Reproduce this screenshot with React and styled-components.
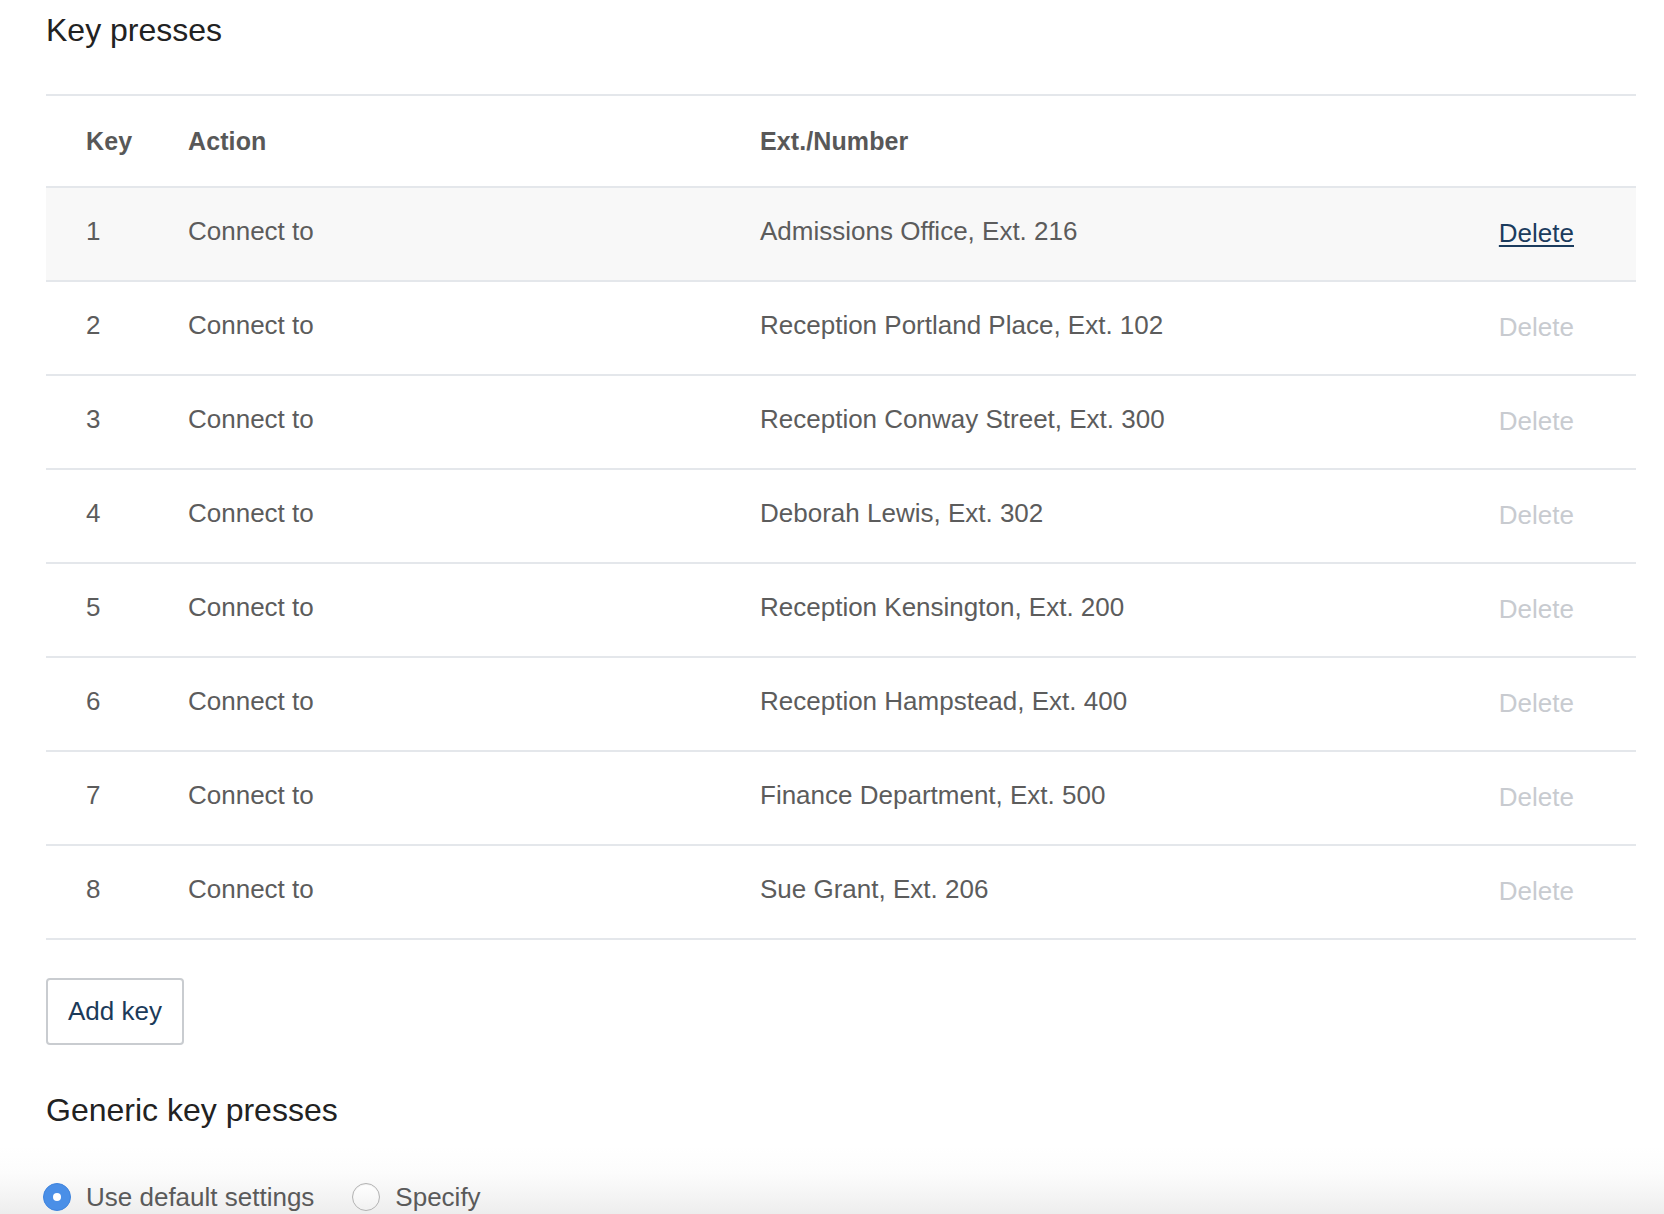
import React from "react";
import styled, { createGlobalStyle } from "styled-components";

const GlobalStyle = createGlobalStyle`
  html, body { margin: 0; padding: 0; background: #ffffff; }
  body { font-family: "Liberation Sans", Arial, Helvetica, sans-serif; }
  * { box-sizing: border-box; }
`;

const Page = styled.div`
  padding: 0 28px 0 46px;
  display: flex;
  flex-direction: column;
  align-items: stretch;
`;

const Heading = styled.h2`
  margin: ${(p) => p.$top}px 0 0 0;
  font-size: 32px;
  line-height: 38px;
  font-weight: 400;
  color: #222222;
`;

const Table = styled.div`
  margin-top: 45px;
  border-top: 2px solid #e4e7eb;
  display: flex;
  flex-direction: column;
`;

const Row = styled.div`
  display: grid;
  grid-template-columns: 102px 572px 1fr auto;
  align-items: center;
  padding: 0 62px 0 40px;
  height: ${(p) => (p.$header ? 92 : 94)}px;
  border-bottom: 2px solid #e4e7eb;
  background: ${(p) => (p.$active ? "#f8f8f8" : "#ffffff")};
`;

const HeadCell = styled.div`
  font-size: 25px;
  font-weight: 700;
  color: #585858;
  letter-spacing: 0.1px;
`;

const Cell = styled.div`
  font-size: 26px;
  color: #5c5c5c;
  padding-bottom: 6px;
  white-space: nowrap;
`;

const DeleteLink = styled.a`
  font-size: 26px;
  padding-bottom: 2px;
  cursor: pointer;
  color: ${(p) => (p.$active ? "#1b3c5e" : "#c8cbd0")};
  text-decoration: ${(p) => (p.$active ? "underline" : "none")};
  text-decoration-thickness: 2px;
  text-underline-offset: 3px;
`;

const AddButton = styled.button`
  align-self: flex-start;
  margin-top: 38px;
  height: 67px;
  padding: 0 20px;
  background: #ffffff;
  border: 2px solid #c9ccd0;
  border-radius: 4px;
  font-family: "Liberation Sans", Arial, Helvetica, sans-serif;
  font-size: 26px;
  color: #1b3a5a;
  cursor: pointer;
`;

const RadioBar = styled.div`
  margin: 17px -28px 0 -46px;
  padding: 37px 0 3px 43px;
  height: 68px;
  display: flex;
  align-items: center;
  gap: 38px;
  background: linear-gradient(to bottom, #ffffff 0%, #fcfcfc 40%, #f4f4f4 75%, #ededed 100%);
`;

const RadioLabel = styled.label`
  display: flex;
  align-items: center;
  gap: 15px;
  font-size: 26px;
  color: #5a5a5a;
  cursor: pointer;
`;

const RadioCircle = styled.span`
  width: 28px;
  height: 28px;
  border-radius: 50%;
  flex: none;
  display: flex;
  align-items: center;
  justify-content: center;
  background: ${(p) =>
    p.$checked ? "#4a8fe7" : "linear-gradient(to bottom, #ffffff, #f1f1f1)"};
  border: 1px solid ${(p) => (p.$checked ? "#3f84de" : "#b3b3b3")};
  box-shadow: ${(p) => (p.$checked ? "none" : "inset 0 1px 1px rgba(0,0,0,0.06)")};
  &::after {
    content: "";
    display: ${(p) => (p.$checked ? "block" : "none")};
    width: 8px;
    height: 8px;
    border-radius: 50%;
    background: #ffffff;
  }
`;

const rows = [
  "Admissions Office, Ext. 216",
  "Reception Portland Place, Ext. 102",
  "Reception Conway Street, Ext. 300",
  "Deborah Lewis, Ext. 302",
  "Reception Kensington, Ext. 200",
  "Reception Hampstead, Ext. 400",
  "Finance Department, Ext. 500",
  "Sue Grant, Ext. 206",
];

export default function App() {
  return (
    <>
      <GlobalStyle />
      <Page>
        <Heading $top={11}>Key presses</Heading>
        <Table>
          <Row $header>
            <HeadCell>Key</HeadCell>
            <HeadCell>Action</HeadCell>
            <HeadCell>Ext./Number</HeadCell>
            <span />
          </Row>
          {rows.map((dest, i) => (
            <Row key={i} $active={i === 0}>
              <Cell>{i + 1}</Cell>
              <Cell>Connect to</Cell>
              <Cell>{dest}</Cell>
              <DeleteLink $active={i === 0}>Delete</DeleteLink>
            </Row>
          ))}
        </Table>
        <AddButton>Add key</AddButton>
        <Heading $top={46}>Generic key presses</Heading>
        <RadioBar>
          <RadioLabel>
            <RadioCircle $checked />
            Use default settings
          </RadioLabel>
          <RadioLabel>
            <RadioCircle />
            Specify
          </RadioLabel>
        </RadioBar>
      </Page>
    </>
  );
}
